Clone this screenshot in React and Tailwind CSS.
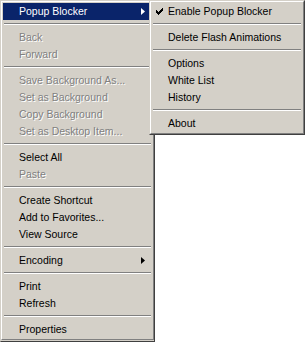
import React from "react";

const F = { fontFamily: '"Liberation Sans", Arial, sans-serif' };

function Arrow({ white }) {
  return (
    <svg width="4" height="7" viewBox="0 0 4 7" className="block">
      <path d="M0 0 L4 3.5 L0 7 Z" fill={white ? "#ffffff" : "#000000"} />
    </svg>
  );
}

function Check() {
  return (
    <svg width="7" height="7" viewBox="0 0 7 7" className="block">
      <path d="M0 2h1v1h1v1h1V3h1V2h1V1h1V0h1v3H6v1H5v1H4v1H3v1H2V6H1V5H0z" fill="#000" />
    </svg>
  );
}

function Item({ label, disabled, active, arrow, check, pl = "pl-[16px]" }) {
  return (
    <div
      className={`relative flex items-center h-[17px] ${pl} pr-[7px] text-[10.5px] leading-[17px] whitespace-nowrap ${
        active ? "bg-[#0a246a] text-white" : disabled ? "text-[#808080]" : "text-black"
      }`}
    >
      {check && (
        <span className="absolute left-[4px] top-[5px]">
          <Check />
        </span>
      )}
      <span
        className={`flex-1 ${disabled ? "[text-shadow:1px_1px_0_#ffffff]" : ""}`}
      >
        {label}
      </span>
      {arrow && <Arrow white={active} />}
    </div>
  );
}

function Sep() {
  return (
    <div className="h-[9px] pt-[3px] px-px">
      <div className="h-px bg-[#808080]" />
      <div className="h-px bg-white" />
    </div>
  );
}

function Frame({ className, children }) {
  return (
    <div
      className={`border border-t-[#d4d0c8] border-l-[#d4d0c8] border-r-[#404040] border-b-[#404040] bg-[#d4d0c8] ${className}`}
    >
      <div className="border border-t-white border-l-white border-r-[#808080] border-b-[#808080] p-px">
        {children}
      </div>
    </div>
  );
}

export default function App() {
  return (
    <div className="relative w-[307px] h-[342px] bg-white overflow-hidden" style={F}>
      <Frame className="w-[155px] h-[342px]">
        <Item label="Popup Blocker" active arrow />
        <Sep />
        <Item label="Back" disabled />
        <Item label="Forward" disabled />
        <Sep />
        <Item label="Save Background As..." disabled />
        <Item label="Set as Background" disabled />
        <Item label="Copy Background" disabled />
        <Item label="Set as Desktop Item..." disabled />
        <Sep />
        <Item label="Select All" />
        <Item label="Paste" disabled />
        <Sep />
        <Item label="Create Shortcut" />
        <Item label="Add to Favorites..." />
        <Item label="View Source" />
        <Sep />
        <Item label="Encoding" arrow />
        <Sep />
        <Item label="Print" />
        <Item label="Refresh" />
        <Sep />
        <Item label="Properties" />
      </Frame>
      <Frame className="absolute left-[149px] top-0 w-[156px] h-[135px]">
        <Item label="Enable Popup Blocker" check />
        <Sep />
        <Item label="Delete Flash Animations" />
        <Sep />
        <Item label="Options" />
        <Item label="White List" />
        <Item label="History" />
        <Sep />
        <Item label="About" />
      </Frame>
    </div>
  );
}
